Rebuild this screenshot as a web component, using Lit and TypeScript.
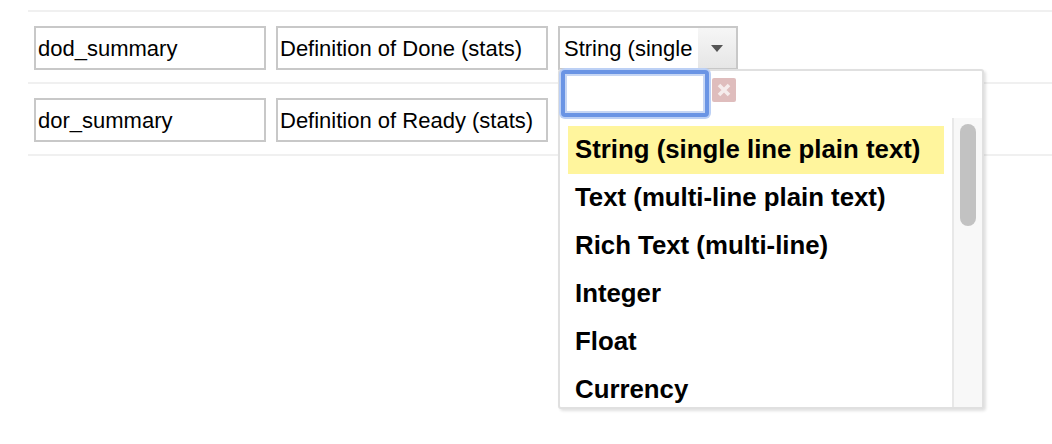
import { LitElement, html, css } from "lit";
import { customElement } from "lit/decorators.js";

const OPTIONS = [
  "String (single line plain text)",
  "Text (multi-line plain text)",
  "Rich Text (multi-line)",
  "Integer",
  "Float",
  "Currency",
];

const ROWS = [
  { name: "dod_summary", label: "Definition of Done (stats)", select: true },
  { name: "dor_summary", label: "Definition of Ready (stats)", select: false },
];

@customElement("app-root")
export class AppRoot extends LitElement {
  static styles = css`
    :host {
      display: block;
      position: relative;
      width: 1052px;
      height: 444px;
      overflow: hidden;
      background: #fff;
      font-family: "Liberation Sans", Arial, sans-serif;
      color: #000;
    }
    .table {
      margin: 10px 0 0 28px;
      border-top: 2px solid #f0f0f0;
    }
    .row {
      display: flex;
      gap: 10px;
      height: 72px;
      box-sizing: border-box;
      padding: 14px 0 0 6px;
      border-bottom: 2px solid #f0f0f0;
    }
    .field {
      box-sizing: border-box;
      height: 44px;
      border: 2px solid #c8c8c8;
      background: #fff;
      font-size: 22px;
      line-height: 40px;
      padding: 1px 0 0 2px;
      white-space: nowrap;
      overflow: hidden;
    }
    .name { width: 232px; }
    .label { width: 272px; }
    .select {
      box-sizing: border-box;
      width: 180px;
      height: 44px;
      border: 2px solid #c8c8c8;
      display: flex;
      font-size: 22px;
      line-height: 40px;
    }
    .select-text {
      flex: 1;
      padding: 1px 0 0 4px;
      overflow: hidden;
      white-space: nowrap;
    }
    .select-btn {
      width: 38px;
      display: flex;
      align-items: center;
      justify-content: center;
      background: linear-gradient(#f6f6f6, #e6e6e6);
    }
    .caret {
      width: 0;
      height: 0;
      border-left: 6px solid transparent;
      border-right: 6px solid transparent;
      border-top: 7px solid #555;
    }
    .menu {
      position: absolute;
      left: 558px;
      top: 69px;
      width: 426px;
      height: 340px;
      box-sizing: border-box;
      background: #fff;
      border: 2px solid #e0e0e0;
      border-radius: 3px;
      box-shadow: 2px 2px 3px rgba(0, 0, 0, 0.12);
      display: flex;
      flex-direction: column;
    }
    .search {
      display: flex;
      align-items: flex-start;
      gap: 3px;
      height: 47px;
      flex: none;
      padding: 0 0 0 1px;
    }
    .search-input {
      box-sizing: border-box;
      width: 148px;
      height: 47px;
      background: #fff;
      border: 4px solid #6a94e4;
      border-radius: 4px;
      box-shadow: 0 0 0 2px #bcd0f5, inset 0 0 0 2px #c6d6f4;
      margin-top: -1px;
    }
    .clear {
      width: 24px;
      height: 24px;
      border-radius: 2px;
      background: #dfbdbd;
      display: flex;
      align-items: center;
      justify-content: center;
      margin-top: 7px;
    }
    .body {
      flex: 1;
      display: flex;
      min-height: 0;
      overflow: hidden;
    }
    .list {
      flex: 1;
      padding: 8px 8px 0 8px;
      overflow: hidden;
    }
    .option {
      height: 48px;
      line-height: 46px;
      padding-left: 7px;
      font-size: 25.8px;
      font-weight: 700;
      white-space: nowrap;
    }
    .option.active { background: #fff59d; }
    .scroll {
      box-sizing: border-box;
      width: 30px;
      flex: none;
      background: #f8f8f8;
      border-left: 2px solid #e8e8e8;
      padding: 6px 6px 0 6px;
    }
    .thumb {
      width: 16px;
      height: 102px;
      border-radius: 8px;
      background: #c2c2c2;
    }
  `;

  render() {
    return html`
      <div class="table">
        ${ROWS.map(
          (r) => html`
            <div class="row">
              <div class="field name">${r.name}</div>
              <div class="field label">${r.label}</div>
              ${r.select
                ? html`<div class="select">
                    <div class="select-text">String (single</div>
                    <div class="select-btn"><span class="caret"></span></div>
                  </div>`
                : ""}
            </div>
          `
        )}
      </div>
      <div class="menu">
        <div class="search">
          <div class="search-input"></div>
          <div class="clear">
            <svg width="14" height="14" viewBox="0 0 14 14">
              <path d="M2 2 L12 12 M12 2 L2 12" stroke="#f5ecec" stroke-width="3.6" fill="none" />
            </svg>
          </div>
        </div>
        <div class="body">
          <div class="list">
            ${OPTIONS.map(
              (o, i) => html`<div class="option ${i === 0 ? "active" : ""}">${o}</div>`
            )}
          </div>
          <div class="scroll"><div class="thumb"></div></div>
        </div>
      </div>
    `;
  }
}
